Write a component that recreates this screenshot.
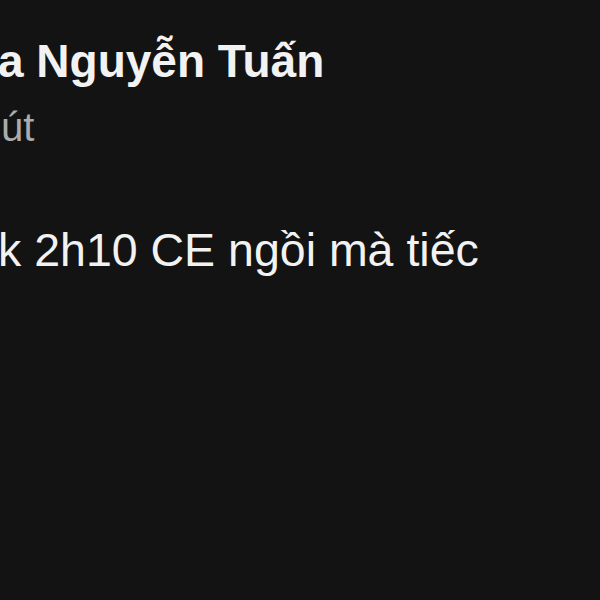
export default function App() {
  return (
    <div className="w-[600px] h-[600px] overflow-hidden bg-[#131313] text-white font-['Liberation_Sans',Arial,sans-serif]">
      <div className="pt-[35px]">
        <div className="-ml-[2px] text-[46px] leading-[52px] font-bold whitespace-nowrap text-[#f2f2f2]">a Nguyễn Tuấn</div>
        <div className="mt-[17px] ml-[1px] text-[40px] leading-[46px] whitespace-nowrap text-[#acacac]">út</div>
        <div className="mt-[74px] -ml-[2px] text-[46.5px] leading-[52px] whitespace-nowrap text-[#f2f2f2]">k 2h10 CE ngồi mà tiếc</div>
      </div>
    </div>
  );
}
